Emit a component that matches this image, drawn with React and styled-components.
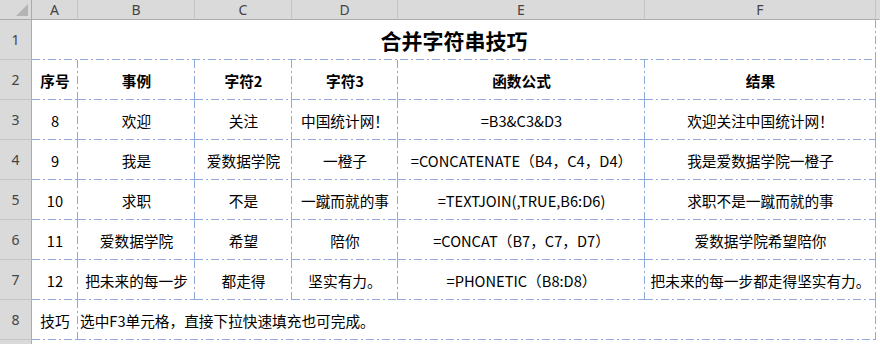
import { Fragment } from "react";
import styled, { createGlobalStyle } from "styled-components";

const GlobalStyle = createGlobalStyle`
  body {
    margin: 0;
    background: #ffffff;
    overflow: hidden;
    font-family: "Noto Sans CJK SC", "Noto Sans", sans-serif;
  }
`;

const LINE = "#8ea9db";
const dash = (dir) =>
  `repeating-linear-gradient(${dir}, ${LINE} 0 8px, transparent 8px 11px, ${LINE} 11px 13px, transparent 13px 16px)`;

const Sheet = styled.div`
  display: grid;
  grid-template-columns: 32px 46px 117px 97px 106px 247px 231px 4px;
  grid-template-rows: 20px repeat(9, 40px);
  width: 880px;
  height: 344px;
  overflow: hidden;
`;

const Corner = styled.div`
  background: #dadada;
  border-right: 1px solid #ababab;
  border-bottom: 1px solid #ababab;
  box-sizing: border-box;
  display: flex;
  align-items: flex-end;
  justify-content: flex-end;
  padding: 0 3px 3px 0;
  &::after {
    content: "";
    width: 12px;
    height: 12px;
    background: #b4b4b4;
    clip-path: polygon(100% 0, 100% 100%, 0 100%);
  }
`;

const ColHead = styled.div`
  background: #dadada;
  border-bottom: 1px solid #ababab;
  border-right: 1px solid ${(p) => (p.$last ? "transparent" : "#c4c4c4")};
  box-sizing: border-box;
  display: flex;
  align-items: center;
  justify-content: center;
  font-family: "Noto Sans", sans-serif;
  font-size: 14px;
  color: #444;
`;

const RowHead = styled.div`
  background: #dadada;
  border-right: 1px solid #ababab;
  border-bottom: 1px solid #c4c4c4;
  box-sizing: border-box;
  display: flex;
  align-items: center;
  justify-content: center;
  font-family: "Noto Sans", sans-serif;
  font-size: 14px;
  color: #444;
`;

const Cell = styled.div`
  grid-column: span ${(p) => p.$span || 1};
  display: flex;
  align-items: center;
  justify-content: ${(p) => (p.$left ? "flex-start" : "center")};
  padding: 0 2px;
  box-sizing: border-box;
  white-space: nowrap;
  overflow: hidden;
  font-size: ${(p) => (p.$title ? "21px" : "14.67px")};
  font-weight: ${(p) => (p.$bold || p.$title ? 700 : 400)};
  color: #000;
  background-image: ${(p) => (p.$plain ? "none" : `${dash("to right")}, ${dash("to bottom")}`)};
  background-size: 100% 1px, 1px 100%;
  background-position: left bottom, right top;
  background-repeat: no-repeat;
`;

const Blank = styled.div`
  background: #ffffff;
`;

const headers = ["序号", "事例", "字符2", "字符3", "函数公式", "结果"];

const rows = [
  ["8", "欢迎", "关注", "中国统计网！", "=B3&C3&D3", "欢迎关注中国统计网！"],
  ["9", "我是", "爱数据学院", "一橙子", "=CONCATENATE（B4，C4，D4）", "我是爱数据学院一橙子"],
  ["10", "求职", "不是", "一蹴而就的事", "=TEXTJOIN(,TRUE,B6:D6)", "求职不是一蹴而就的事"],
  ["11", "爱数据学院", "希望", "陪你", "=CONCAT（B7，C7，D7）", "爱数据学院希望陪你"],
  ["12", "把未来的每一步", "都走得", "坚实有力。", "=PHONETIC（B8:D8）", "把未来的每一步都走得坚实有力。"],
];

const App = () => {
  return (
    <>
      <GlobalStyle />
      <Sheet>
        <Corner />
        {["A", "B", "C", "D", "E", "F"].map((c) => (
          <ColHead key={c}>{c}</ColHead>
        ))}
        <ColHead $last />

        <RowHead>1</RowHead>
        <Cell $span={6} $title>
          合并字符串技巧
        </Cell>
        <Blank />

        <RowHead>2</RowHead>
        {headers.map((h) => (
          <Cell key={h} $bold>
            {h}
          </Cell>
        ))}
        <Blank />

        {rows.map((r, i) => (
          <Fragment key={i}>
            <RowHead>{i + 3}</RowHead>
            {r.map((v, j) => (
              <Cell key={j}>{v}</Cell>
            ))}
            <Blank />
          </Fragment>
        ))}

        <RowHead>8</RowHead>
        <Cell>技巧</Cell>
        <Cell $span={5} $left>
          选中F3单元格，直接下拉快速填充也可完成。
        </Cell>
        <Blank />

        <RowHead />
        <Cell $span={6} $plain />
        <Blank />
      </Sheet>
    </>
  );
};

export default App;
